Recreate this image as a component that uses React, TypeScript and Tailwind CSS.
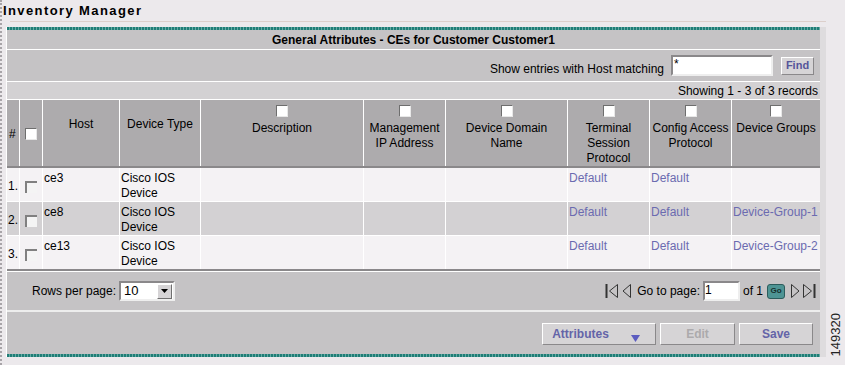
import React from 'react';

const cols = 'grid grid-cols-[13px_23px_77px_81px_163px_82px_122px_82px_82px_88px]';

const rows = [
  { n: '1.', host: 'ce3', term: 'Default', cfg: 'Default', group: '', bg: 'bg-[#f4f2f4]' },
  { n: '2.', host: 'ce8', term: 'Default', cfg: 'Default', group: 'Device-Group-1', bg: 'bg-[#d3d1d3]' },
  { n: '3.', host: 'ce13', term: 'Default', cfg: 'Default', group: 'Device-Group-2', bg: 'bg-[#f4f2f4]' },
];

const Box: React.FC<{ sunken?: boolean }> = ({ sunken }) => (
  <span
    className={
      sunken
        ? 'inline-block w-[12px] h-[12px] border-t-2 border-l-2 border-[#808080] bg-[#f4f4f4]'
        : 'inline-block w-[12px] h-[12px] border border-t-[#6e6e6e] border-l-[#6e6e6e] border-r-[#e8e8e8] border-b-[#e8e8e8] bg-white'
    }
  />
);

const HeadCell: React.FC<{ box?: boolean; last?: boolean; children: React.ReactNode }> = ({ box, last, children }) => (
  <div className={`flex flex-col items-center text-center leading-[15px] ${last ? '' : 'border-r border-white'} ${box ? 'pt-[5px]' : 'pt-[17px]'}`}>
    {box && <Box />}
    <div className={box ? 'mt-[4px]' : ''}>{children}</div>
  </div>
);

const Link: React.FC<{ children: React.ReactNode }> = ({ children }) => (
  <span className="text-[#6b6bb0]">{children}</span>
);

const Teal = () => (
  <div className="h-[3px] bg-[repeating-linear-gradient(90deg,#1f7d76_0px,#1f7d76_2px,#64aaa4_2px,#64aaa4_3px)]" />
);

const Btn: React.FC<{ w: string; dim?: boolean; children: React.ReactNode }> = ({ w, dim, children }) => (
  <div
    className={`${w} h-[22px] flex items-center justify-center bg-[#d6d4d6] border border-t-white border-l-white border-r-[#8a888a] border-b-[#8a888a] font-bold text-[12px] ${dim ? 'text-[#acaaac]' : 'text-[#6464a8]'}`}
  >
    {children}
  </div>
);

export default function App() {
  return (
    <div className="w-[845px] h-[365px] bg-[#ece9ec] flex overflow-hidden text-[12px] text-black font-['Liberation_Sans',Arial,sans-serif]">
      <div className="w-[2px] h-full border-l-2 border-dotted border-[#a8a4a8]" />
      <div className="w-[824px] flex flex-col">
        <div className="h-[21px] pl-[1px] pt-[3px] text-[13px] font-bold tracking-[1.4px] leading-[15px]">Inventory Manager</div>
        <div className="ml-[8px] h-px bg-[#dccfcb]" />
        <div className="h-[5px]" />
        <div className="flex">
          <div className="ml-[4px] w-[814px] border-l border-white">
            <Teal />
            <div className="h-[18px] bg-[#c5c3c5] border-b border-white flex items-center justify-center font-bold leading-none box-content pt-[1px]">
              General Attributes - CEs for Customer Customer1
            </div>
            <div className="h-[31px] bg-[#c5c3c5] border-b border-white box-content flex items-center justify-end pr-[6px]">
              <span className="mt-[6px]">Show entries with Host matching</span>
              <div className="ml-[7px] w-[102px] h-[21px] bg-white border-2 border-t-[#8a888a] border-l-[#8a888a] border-r-[#eeeeee] border-b-[#eeeeee] leading-[14px] pl-[1px]">*</div>
              <div className="ml-[8px] w-[33px] h-[18px] bg-[#d6d4d6] border border-t-white border-l-white border-r-[#8a888a] border-b-[#8a888a] flex items-center justify-center text-[11px] font-bold text-[#55559a]">
                Find
              </div>
            </div>
            <div className="h-[16px] bg-[#d3d1d3] border-b border-white box-content flex items-center justify-end pr-[2px] leading-none pt-[1px]">
              Showing 1 - 3 of 3 records
            </div>
            <div className={`${cols} h-[66px] bg-[#adabad] border-b-2 border-[#8a888a] box-content`}>
              <div className="border-r border-white flex items-center pl-[2px] pt-[2px]">#</div>
              <div className="border-r border-white flex items-center justify-center pt-[2px]"><Box /></div>
              <HeadCell>Host</HeadCell>
              <HeadCell>Device Type</HeadCell>
              <HeadCell box>Description</HeadCell>
              <HeadCell box>Management<br />IP Address</HeadCell>
              <HeadCell box>Device Domain<br />Name</HeadCell>
              <HeadCell box>Terminal<br />Session<br />Protocol</HeadCell>
              <HeadCell box>Config Access<br />Protocol</HeadCell>
              <HeadCell box last>Device Groups</HeadCell>
            </div>
            {rows.map((r, i) => (
              <div key={r.n} className={`${cols} h-[33px] box-content ${r.bg} ${i < 2 ? 'border-b border-white' : ''} leading-[15px]`}>
                <div className="border-r border-white flex items-center pl-[1px] pt-[4px]">{r.n}</div>
                <div className="border-r border-white flex items-center justify-center pt-[4px] pr-[1px]"><Box sunken /></div>
                <div className="border-r border-white pl-[1px] pt-[3px]">{r.host}</div>
                <div className="border-r border-white pl-[1px] pt-[3px]">Cisco IOS<br />Device</div>
                <div className="border-r border-white" />
                <div className="border-r border-white" />
                <div className="border-r border-white" />
                <div className="border-r border-white pl-[1px] pt-[3px]"><Link>{r.term}</Link></div>
                <div className="border-r border-white pl-[1px] pt-[3px]"><Link>{r.cfg}</Link></div>
                <div className="pl-[1px] pt-[3px]"><Link>{r.group}</Link></div>
              </div>
            ))}
            <div className="h-[2px] bg-[#8a888a]" />
            <div className="h-[38px] bg-[#c5c3c5] border-t border-white box-content flex items-center pl-[25px] pr-[4px]">
              <span>Rows per page:</span>
              <div className="ml-[3px] w-[56px] h-[20px] bg-white border-2 border-t-[#8a888a] border-l-[#8a888a] border-r-[#eeeeee] border-b-[#eeeeee] flex items-center">
                <span className="flex-1 pl-[3px] text-[13px]">10</span>
                <div className="w-[15px] h-[15px] mr-[1px] bg-[#d6d4d6] border border-t-white border-l-white border-r-[#707070] border-b-[#707070] flex items-center justify-center">
                  <svg width="7" height="4" viewBox="0 0 7 4"><path d="M0 0h7L3.5 4z" fill="#000" /></svg>
                </div>
              </div>
              <div className="flex-1" />
              <svg width="14" height="16" viewBox="0 0 14 16" className="mr-[3px]">
                <path d="M1.5 1v14" stroke="#333" strokeWidth="2" fill="none" />
                <path d="M12.5 1.5v13L4.5 8z" stroke="#333" strokeWidth="1" fill="none" />
              </svg>
              <svg width="9" height="16" viewBox="0 0 9 16" className="mr-[6px]">
                <path d="M8.5 1.5v13L1 8z" stroke="#333" strokeWidth="1" fill="none" />
              </svg>
              <span>Go to page:</span>
              <div className="ml-[3px] w-[37px] h-[20px] bg-white border-2 border-t-[#8a888a] border-l-[#8a888a] border-r-[#eeeeee] border-b-[#eeeeee] leading-[14px] text-[12px]">1</div>
              <span className="ml-[3px]">of 1</span>
              <div className="ml-[4px] w-[18px] h-[15px] rounded-[3px] bg-[#4e9494] border border-[#2c5c5c] flex items-center justify-center text-[8px] font-bold text-[#16302e]">Go</div>
              <svg width="9" height="16" viewBox="0 0 9 16" className="ml-[6px]">
                <path d="M0.5 1.5v13L8 8z" stroke="#333" strokeWidth="1" fill="none" />
              </svg>
              <svg width="14" height="16" viewBox="0 0 14 16" className="ml-[2px]">
                <path d="M1.5 1.5v13L9.5 8z" stroke="#333" strokeWidth="1" fill="none" />
                <path d="M12.5 1v14" stroke="#333" strokeWidth="2" fill="none" />
              </svg>
            </div>
            <div className="h-[2px] bg-[#ededed]" />
            <div className="h-[42px] bg-[#c5c3c5] flex items-center justify-end pr-[7px] gap-[4px] pt-[1px]">
              <Btn w="w-[114px]">
                <span className="ml-[-6px]">Attributes</span>
                <svg width="9" height="7" viewBox="0 0 9 7" className="ml-[22px] mt-[9px]"><path d="M0 0h9L4.5 7z" fill="#5c5cc0" /></svg>
              </Btn>
              <Btn w="w-[75px]" dim>Edit</Btn>
              <Btn w="w-[74px]">Save</Btn>
            </div>
            <Teal />
          </div>
          <div className="w-[6px] bg-[#dedcde]" />
        </div>
      </div>
      <div className="flex-1 flex items-end justify-center pb-[9px]">
        <span className="[writing-mode:vertical-rl] rotate-180 text-[13px] text-[#222] leading-none">149320</span>
      </div>
    </div>
  );
}
